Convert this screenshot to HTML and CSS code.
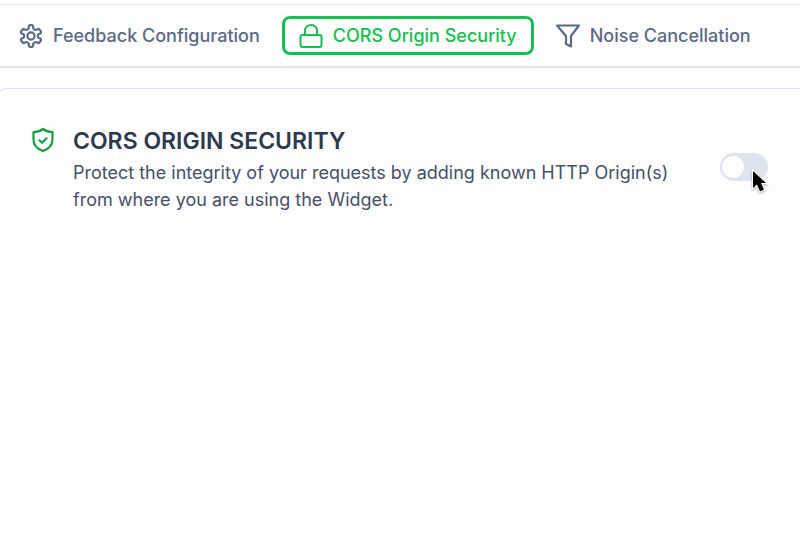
FILE: index.html
```html
<!DOCTYPE html>
<html lang="en">

<head>
    <meta charset="UTF-8">
    <meta name="viewport" content="width=device-width, initial-scale=1.0">
    <title>CORS Origin Security</title>
    <link rel="stylesheet" href="styles.css">
</head>

<body>
    <nav class="tabs">
        <button type="button" class="tab">
            <svg class="icon" viewBox="0 0 24 24" stroke-width="2.2">
                <path d="M12.220 1h-.44a2 2 0 0 0-2 2v.68a2 2 0 0 1-1 1.730l-.43.25a2 2 0 0 1-2 0l-.55-.3a2 2 0 0 0-2.730.73l-.72.880a2 2 0 0 0 .73 2.730l1.050.32a2 2 0 0 1 1 1.720v.51a2 2 0 0 1-1 1.740l-1.050.31a2 2 0 0 0-.73 2.730l.72.880a2 2 0 0 0 2.730.73l.55-.3a2 2 0 0 1 2 0l.43.25a2 2 0 0 1 1 1.730v.68a2 2 0 0 0 2 2h.44a2 2 0 0 0 2-2v-.68a2 2 0 0 1 1-1.730l.43-.25a2 2 0 0 1 2 0l.55.3a2 2 0 0 0 2.730-.73l.72-.880a2 2 0 0 0-.73-2.730l-1.050-.31a2 2 0 0 1-1-1.740v-.51a2 2 0 0 1 1-1.720l1.050-.32a2 2 0 0 0 .73-2.730l-.72-.880a2 2 0 0 0-2.730-.73l-.55.3a2 2 0 0 1-2 0l-.43-.25a2 2 0 0 1-1-1.730V3a2 2 0 0 0-2-2z" />
                <circle cx="12" cy="12" r="3.6" />
            </svg>
            Feedback Configuration
        </button>
        <button type="button" class="tab active">
            <svg class="icon" viewBox="0 0 24 24" stroke-width="2">
                <rect x="1.5" y="11" width="21" height="12" rx="2" />
                <path d="M6 11V6.500a6 5.500 0 0 1 12 0V11" />
            </svg>
            CORS Origin Security
        </button>
        <button type="button" class="tab">
            <svg class="icon" viewBox="0 0 24 24" stroke-width="2.2">
                <path d="M1 1.500h22l-8 10.500v10.500l-5-2.500v-8z" />
            </svg>
            Noise Cancellation
        </button>
    </nav>

    <main class="panel">
        <svg class="icon shield" viewBox="0 0 24 24" stroke-width="2.2">
            <path d="M12 1q4 3 9.500 3v7.500c0 5.500-4 9.500-9.500 11.500-5.500-2-9.500-6-9.500-11.500V4q5.500 0 9.500-3z" />
            <path d="M8.500 12.300l2.500 2.500 4.500-4.500" />
        </svg>
        <div class="text">
            <h1>CORS ORIGIN SECURITY</h1>
            <p id="cors-info">Protect the integrity of your requests by adding known HTTP Origin(s) from where you are using the Widget.</p>
        </div>
        <div class="switch">
            <input type="checkbox" class="toggle" aria-label="CORS origin security" aria-describedby="cors-info">
            <svg class="pointer" viewBox="0 0 18 28">
                <path d="M2 2v17l4-3.500 3 7 4-2-3-6.500H15z" />
            </svg>
        </div>
    </main>
</body>

</html>
```
FILE: styles.css
```css
* {
    box-sizing: border-box;
}

body {
    margin: 0;
    padding-top: 4px;
    min-height: 100vh;
    display: flex;
    flex-direction: column;
    overflow-x: hidden;
    background: #fdfdfd;
    font-family: Inter, "Liberation Sans", sans-serif;
    font-size: 18px;
}

.icon {
    flex: none;
    width: 24px;
    height: 24px;
    fill: none;
    stroke: currentColor;
    stroke-linecap: round;
    stroke-linejoin: round;
}

/* Tab bar */

.tabs {
    display: flex;
    align-items: center;
    gap: 5px;
    padding: 11px 2px;
    border-top: 1px solid #dde4ef;
    border-bottom: 2px solid #e2e8f2;
}

.tab {
    display: flex;
    align-items: center;
    gap: 10px;
    height: 39px;
    padding: 0 14px;
    border: 3px solid transparent;
    border-radius: 8px;
    background: none;
    color: #5b6b84;
    font: inherit;
    font-weight: 500;
    white-space: nowrap;
}

.tab.active {
    border-color: #16c050;
    color: #16c050;
}

/* Settings panel, the left border runs off the page */

.panel {
    flex: 1;
    display: flex;
    align-items: flex-start;
    margin: 20px -12px 0 -2px;
    padding: 35px 43px 32px 32px;
    border: 1px solid #d8e1ee;
    border-bottom: 0;
    border-radius: 8px 8px 0 0;
}

.shield {
    margin: 4px 18px 0 0;
    color: #16a040;
}

.text {
    flex: 1;
    max-width: 612px;
}

h1 {
    margin: 0;
    color: #2d3a4e;
    font-size: 23px;
    font-weight: 600;
    line-height: 35px;
}

p {
    margin: 0;
    color: #475068;
    line-height: 27px;
}

.switch {
    position: relative;
    margin: 29px 0 0 auto;
}

.toggle {
    appearance: none;
    display: flex;
    align-items: center;
    width: 48px;
    height: 28px;
    margin: 0;
    padding: 2px;
    border-radius: 14px;
    background: #dde4ee;
}

.toggle::before {
    content: "";
    width: 22px;
    height: 22px;
    border-radius: 50%;
    background: #fdfdfd;
}

.toggle:checked {
    justify-content: flex-end;
    background: #16c050;
}

.pointer {
    position: absolute;
    top: 16px;
    left: 31px;
    width: 18px;
    height: 28px;
    fill: #000;
    stroke: #fff;
    stroke-width: 2;
    paint-order: stroke;
    filter: drop-shadow(0 1px 1px #0005);
    pointer-events: none;
}
```
